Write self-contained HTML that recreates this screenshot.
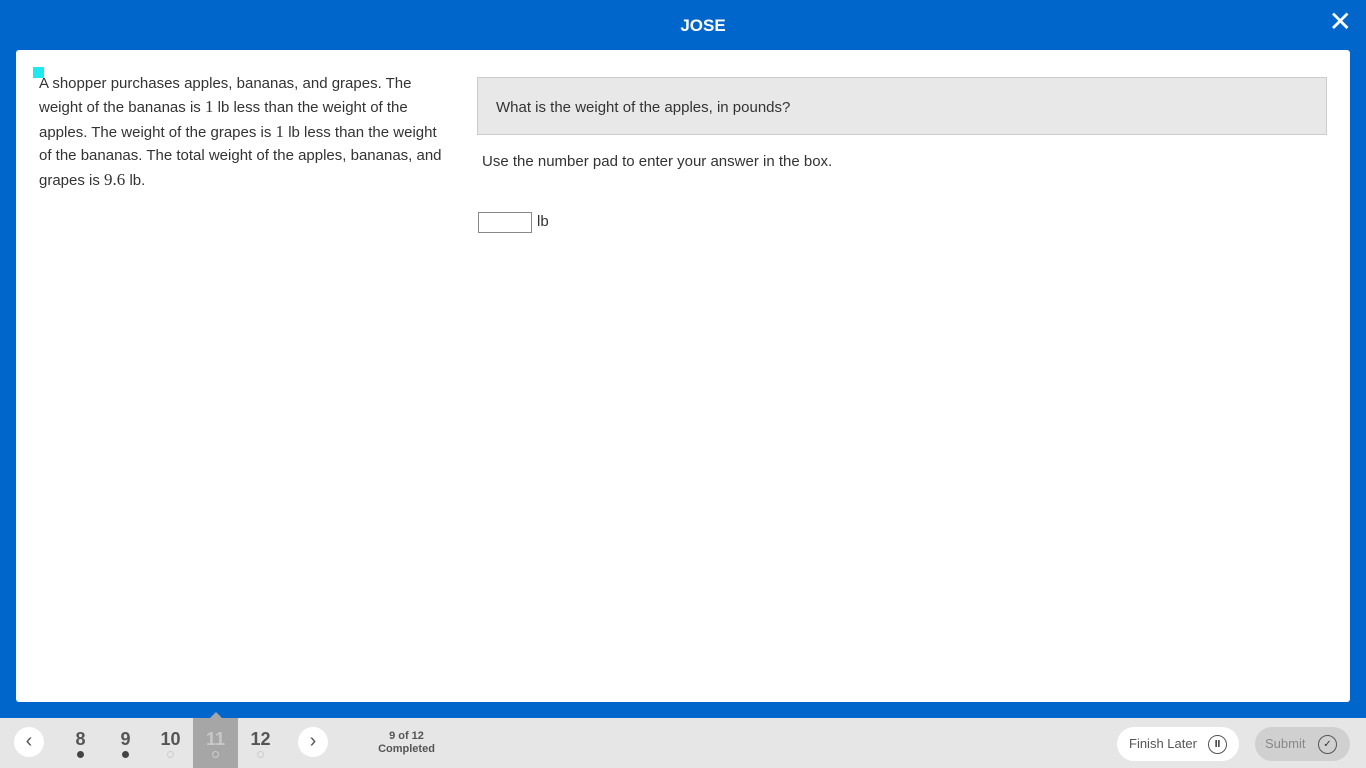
<!DOCTYPE html>
<html><head><style>
*{margin:0;padding:0;box-sizing:border-box}
body{width:1366px;height:768px;background:#0066cc;font-family:"Liberation Sans",sans-serif;position:relative;overflow:hidden}
.hdr{position:absolute;top:0;left:40px;width:1326px;height:50px;color:#fff;text-align:center;font-weight:bold;font-size:17px;line-height:52px}
.x{position:absolute;right:14px;top:8px;color:#fff;font-size:28px;line-height:28px}
.main{position:absolute;left:16px;top:50px;width:1334px;height:652px;background:#fff;border-radius:3px}
.pass{position:absolute;left:23px;top:22px;width:413px;font-size:15px;line-height:23.4px;color:#333}
.mark{position:absolute;left:17px;top:17px;width:11px;height:11px;background:#1de9f0}
.q{position:absolute;left:461px;top:27px;width:850px;height:58px;background:#e8e8e8;border:1px solid #ccc;font-size:15px;color:#333;padding-left:18px;line-height:60px}
.ins{position:absolute;left:466px;top:103px;font-size:15px;color:#333}
.box{position:absolute;left:462px;top:162px;width:54px;height:21px;border:1px solid #888}
.lb{position:absolute;left:521px;top:163px;font-size:15px;color:#333}
.bar{position:absolute;left:0;top:718px;width:1366px;height:50px;background:#e6e6e6}
.circ{position:absolute;top:727px;width:30px;height:30px;border-radius:50%;background:#fff;color:#555;font-size:20px;text-align:center;line-height:28px}
.n{position:absolute;top:729px;width:45px;text-align:center;font-size:18px;font-weight:bold;color:#555}
.dot{position:absolute;top:751px;width:7px;height:7px;border-radius:50%}
.sel{position:absolute;left:193px;top:718px;width:45px;height:50px;background:#a6a6a6}
.comp{position:absolute;left:370px;top:730px;width:73px;text-align:center;font-size:11px;font-weight:bold;color:#555;line-height:13px}
.btn{position:absolute;top:727px;height:34px;border-radius:17px;font-size:13px;line-height:34px;padding-left:12px}
.ic{position:absolute;top:8px;width:19px;height:19px;border-radius:50%;border:1px solid #555;font-size:10px;line-height:17px;text-align:center;color:#333}
</style></head><body>
<div class="hdr">JOSE</div><div class="x">✕</div>
<div class="main">
<div class="mark"></div>
<div class="pass">A shopper purchases apples, bananas, and grapes. The weight of the bananas is <span style="font-family:'Liberation Serif';font-size:17px">1</span> lb less than the weight of the apples. The weight of the grapes is <span style="font-family:'Liberation Serif';font-size:17px">1</span> lb less than the weight of the bananas. The total weight of the apples, bananas, and grapes is <span style="font-family:'Liberation Serif';font-size:17px">9.6</span> lb.</div>
<div class="q">What is the weight of the apples, in pounds?</div>
<div class="ins">Use the number pad to enter your answer in the box.</div>
<div class="box"></div><div class="lb">lb</div>
</div>
<div class="bar"></div>
<div class="sel"></div>
<div style="position:absolute;left:210px;top:712px;border:6px solid transparent;border-bottom-color:#a6a6a6;border-top:0"></div>
<div class="circ" style="left:14px">‹</div>
<div class="circ" style="left:298px">›</div>
<div class="n" style="left:58px">8</div><div class="dot" style="left:77px;background:#444"></div>
<div class="n" style="left:103px">9</div><div class="dot" style="left:122px;background:#444"></div>
<div class="n" style="left:148px">10</div><div class="dot" style="left:167px;border:1px solid #ccc"></div>
<div class="n" style="left:193px;color:#c8c8c8">11</div><div class="dot" style="left:212px;border:1px solid #ccc"></div>
<div class="n" style="left:238px">12</div><div class="dot" style="left:257px;border:1px solid #ccc"></div>
<div class="comp">9 of 12<br>Completed</div>
<div class="btn" style="left:1117px;width:122px;background:#fff;color:#555">Finish Later<div class="ic" style="left:91px;font-weight:bold">II</div></div>
<div class="btn" style="left:1255px;width:95px;background:#d0d0d0;color:#888;padding-left:10px">Submit<div class="ic" style="left:63px">✓</div></div>
</body></html>
